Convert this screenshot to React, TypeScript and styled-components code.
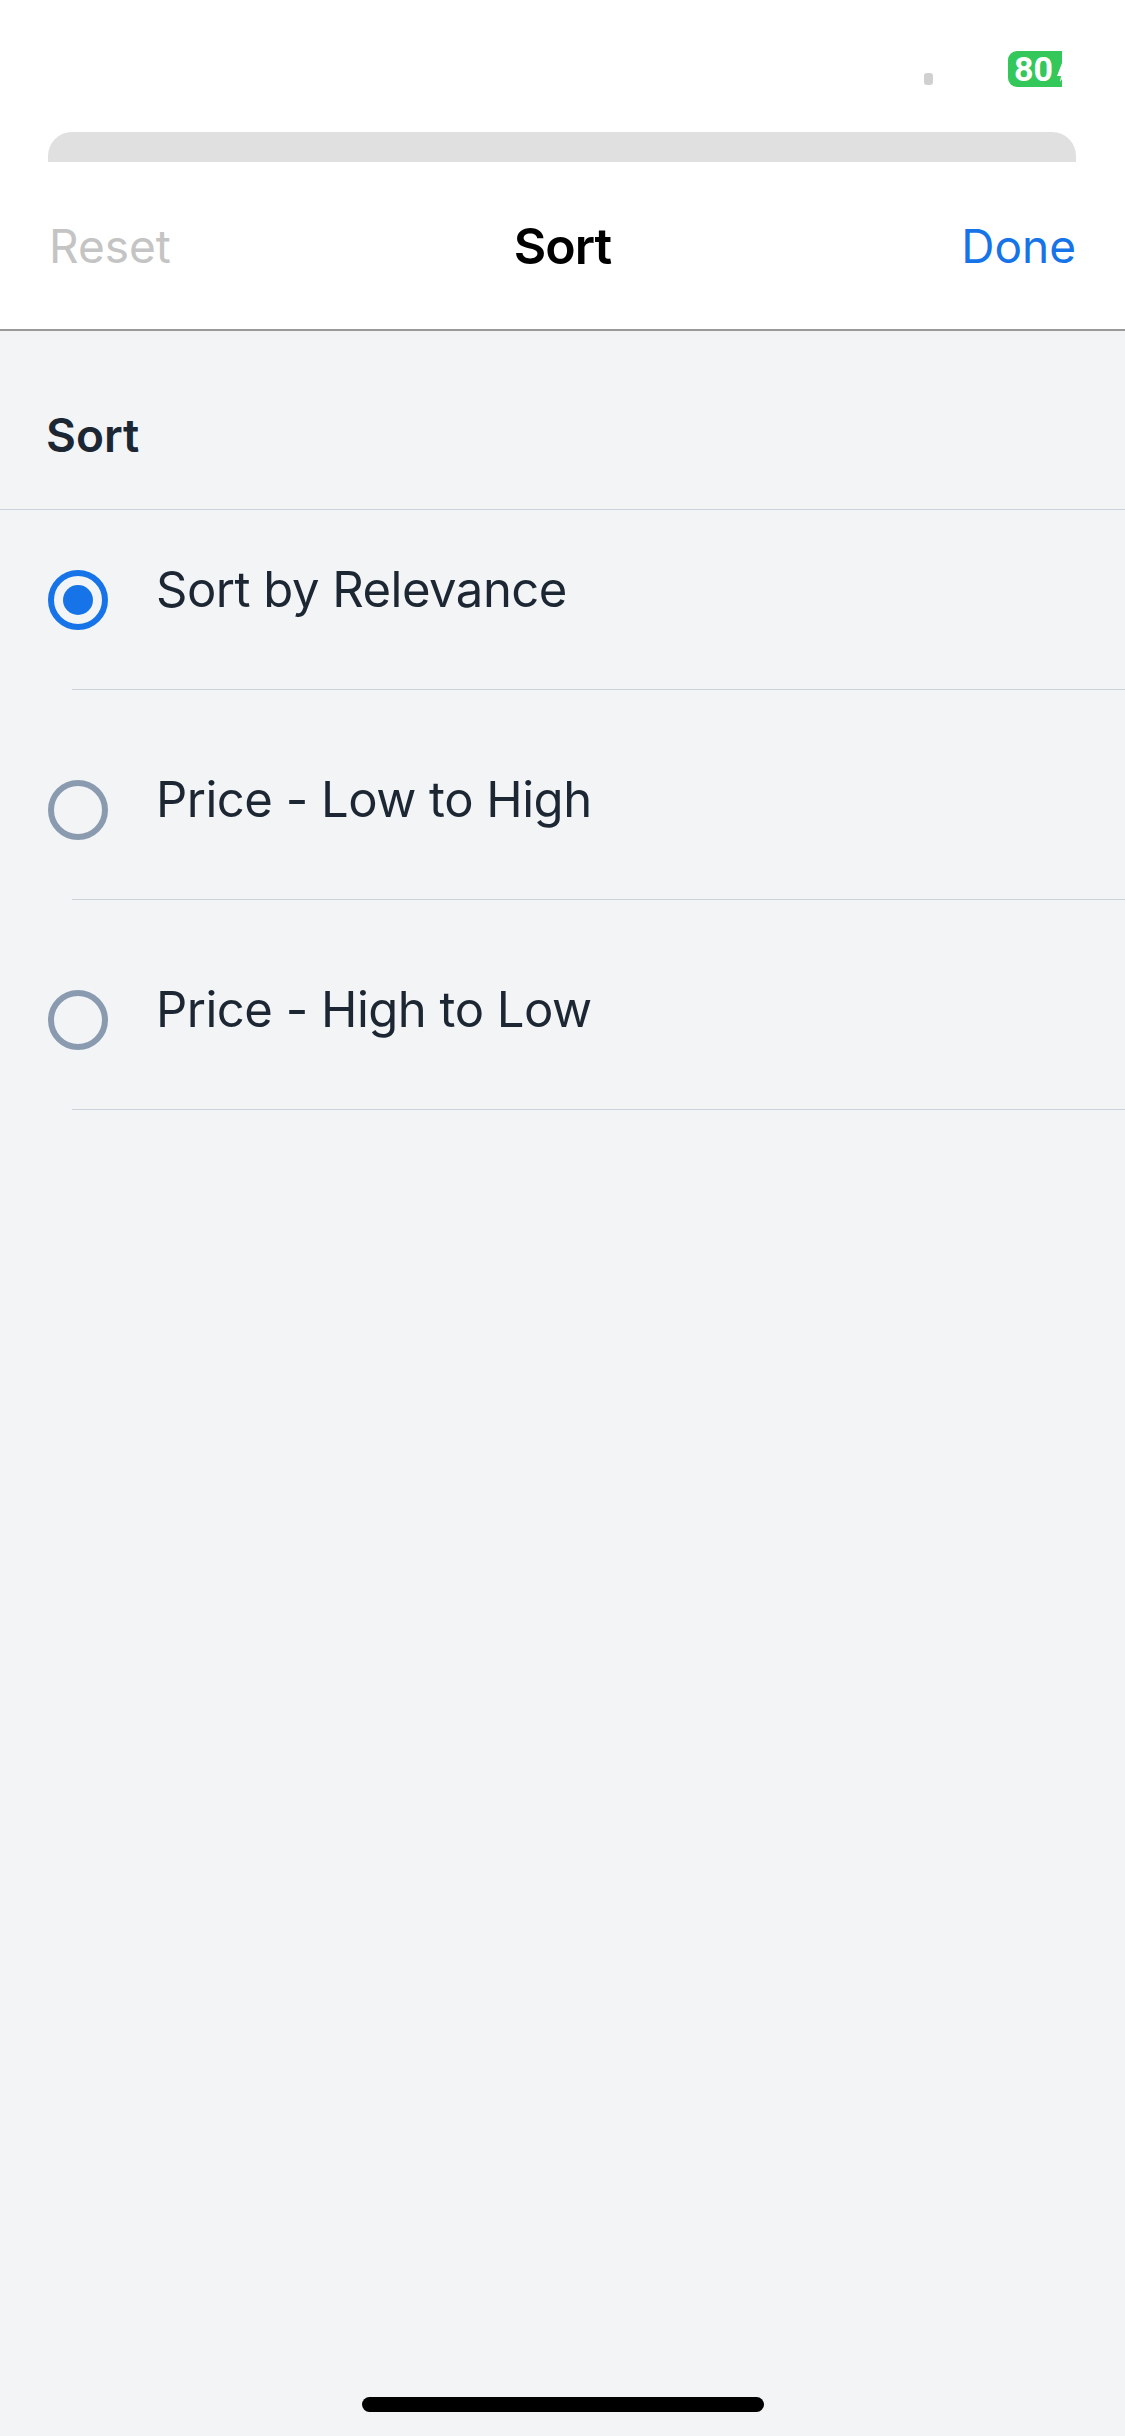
import React from "react";
import styled, { createGlobalStyle } from "styled-components";

const GlobalStyle = createGlobalStyle`
  html, body {
    margin: 0;
    padding: 0;
    background: #f2f4f6;
    font-family: Inter, "Liberation Sans", sans-serif;
  }
`;

const Screen = styled.div`
  position: relative;
  width: 1125px;
  height: 2436px;
  overflow: hidden;
  background: #f2f4f6;
`;

const StatusBar = styled.div`
  display: flex;
  justify-content: flex-end;
  align-items: flex-start;
  height: 132px;
  padding: 51px 63px 0 0;
  box-sizing: border-box;
  background: #fff;
`;

const SignalDot = styled.span`
  width: 9px;
  height: 12px;
  margin: 22px 75px 0 0;
  border-radius: 3px;
  background: #d0d0d0;
`;

const Battery = styled.div`
  display: flex;
  align-items: center;
  justify-content: space-between;
  width: 54px;
  height: 36px;
  padding-left: 6px;
  box-sizing: border-box;
  border-radius: 9px 0 0 9px;
  background: #34c759;
  color: #fff;
  font-family: Roboto, "Liberation Sans", sans-serif;
  font-size: 34px;
  font-weight: 700;
  white-space: nowrap;

  svg {
    flex: none;
  }
`;

const SheetEdge = styled.div`
  height: 30px;
  background: #fff;
  padding: 0 49px 0 48px;

  div {
    height: 100%;
    border-radius: 24px 24px 0 0;
    background: #e0e0e0;
  }
`;

const NavBar = styled.header`
  display: grid;
  grid-template-columns: 1fr auto 1fr;
  align-items: center;
  height: 169px;
  padding: 0 49px;
  box-sizing: border-box;
  background: #fff;
  border-bottom: 2px solid #999;
`;

const NavTitle = styled.h1`
  margin: 0;
  color: #000;
  font-size: 50px;
  font-weight: 600;
  letter-spacing: -1px;
`;

const NavAction = styled.span<{ $tone: "muted" | "accent"; $end?: boolean }>`
  color: ${(props) => (props.$tone === "accent" ? "#1674e8" : "#c4c4c4")};
  font-size: 46px;
  font-weight: 400;
  text-align: ${(props) => (props.$end ? "right" : "left")};
`;

const SectionHeader = styled.div`
  display: flex;
  align-items: center;
  height: 179px;
  padding: 30px 0 0 46px;
  box-sizing: border-box;
  border-bottom: 1px solid #cbd2d9;
  color: #1c2733;
  font-size: 46px;
  font-weight: 600;
`;

const OptionList = styled.div`
  display: flex;
  flex-direction: column;
`;

const Option = styled.div<{ $first?: boolean }>`
  position: relative;
  display: flex;
  align-items: flex-start;
  gap: 48px;
  height: ${(props) => (props.$first ? 180 : 210)}px;
  padding: ${(props) => (props.$first ? 60 : 90)}px 0 0 48px;
  box-sizing: border-box;

  &::after {
    content: "";
    position: absolute;
    left: 72px;
    right: 0;
    bottom: 0;
    height: 1px;
    background: #cbd2d9;
  }
`;

const Radio = styled.span<{ $checked?: boolean }>`
  display: flex;
  align-items: center;
  justify-content: center;
  flex: none;
  width: 60px;
  height: 60px;
  box-sizing: border-box;
  border-radius: 50%;
  border: 6px solid ${(props) => (props.$checked ? "#1674e8" : "#8a9bb0")};

  &::before {
    content: "";
    display: ${(props) => (props.$checked ? "block" : "none")};
    width: 30px;
    height: 30px;
    border-radius: 50%;
    background: #1674e8;
  }
`;

const OptionLabel = styled.span`
  margin-top: -10px;
  color: #1c2733;
  font-size: 49px;
  letter-spacing: -0.5px;
  line-height: 60px;
`;

const HomeIndicator = styled.div`
  position: absolute;
  left: 362px;
  bottom: 24px;
  width: 402px;
  height: 15px;
  border-radius: 8px;
  background: #000;
`;

const options = ["Sort by Relevance", "Price - Low to High", "Price - High to Low"];

const App = () => {
  return (
    <Screen>
      <GlobalStyle />
      <StatusBar>
        <SignalDot />
        <Battery>
          80
          <svg width="6" height="36" viewBox="0 0 6 36">
            <path d="M6 12 1 25h4l-1 6 2-3z" fill="#fff" />
          </svg>
        </Battery>
      </StatusBar>
      <SheetEdge>
        <div />
      </SheetEdge>
      <NavBar>
        <NavAction $tone="muted">Reset</NavAction>
        <NavTitle>Sort</NavTitle>
        <NavAction $tone="accent" $end>
          Done
        </NavAction>
      </NavBar>
      <SectionHeader>Sort</SectionHeader>
      <OptionList>
        {options.map((label, index) => (
          <Option key={label} $first={index === 0}>
            <Radio $checked={index === 0} />
            <OptionLabel>{label}</OptionLabel>
          </Option>
        ))}
      </OptionList>
      <HomeIndicator />
    </Screen>
  );
};

export default App;
